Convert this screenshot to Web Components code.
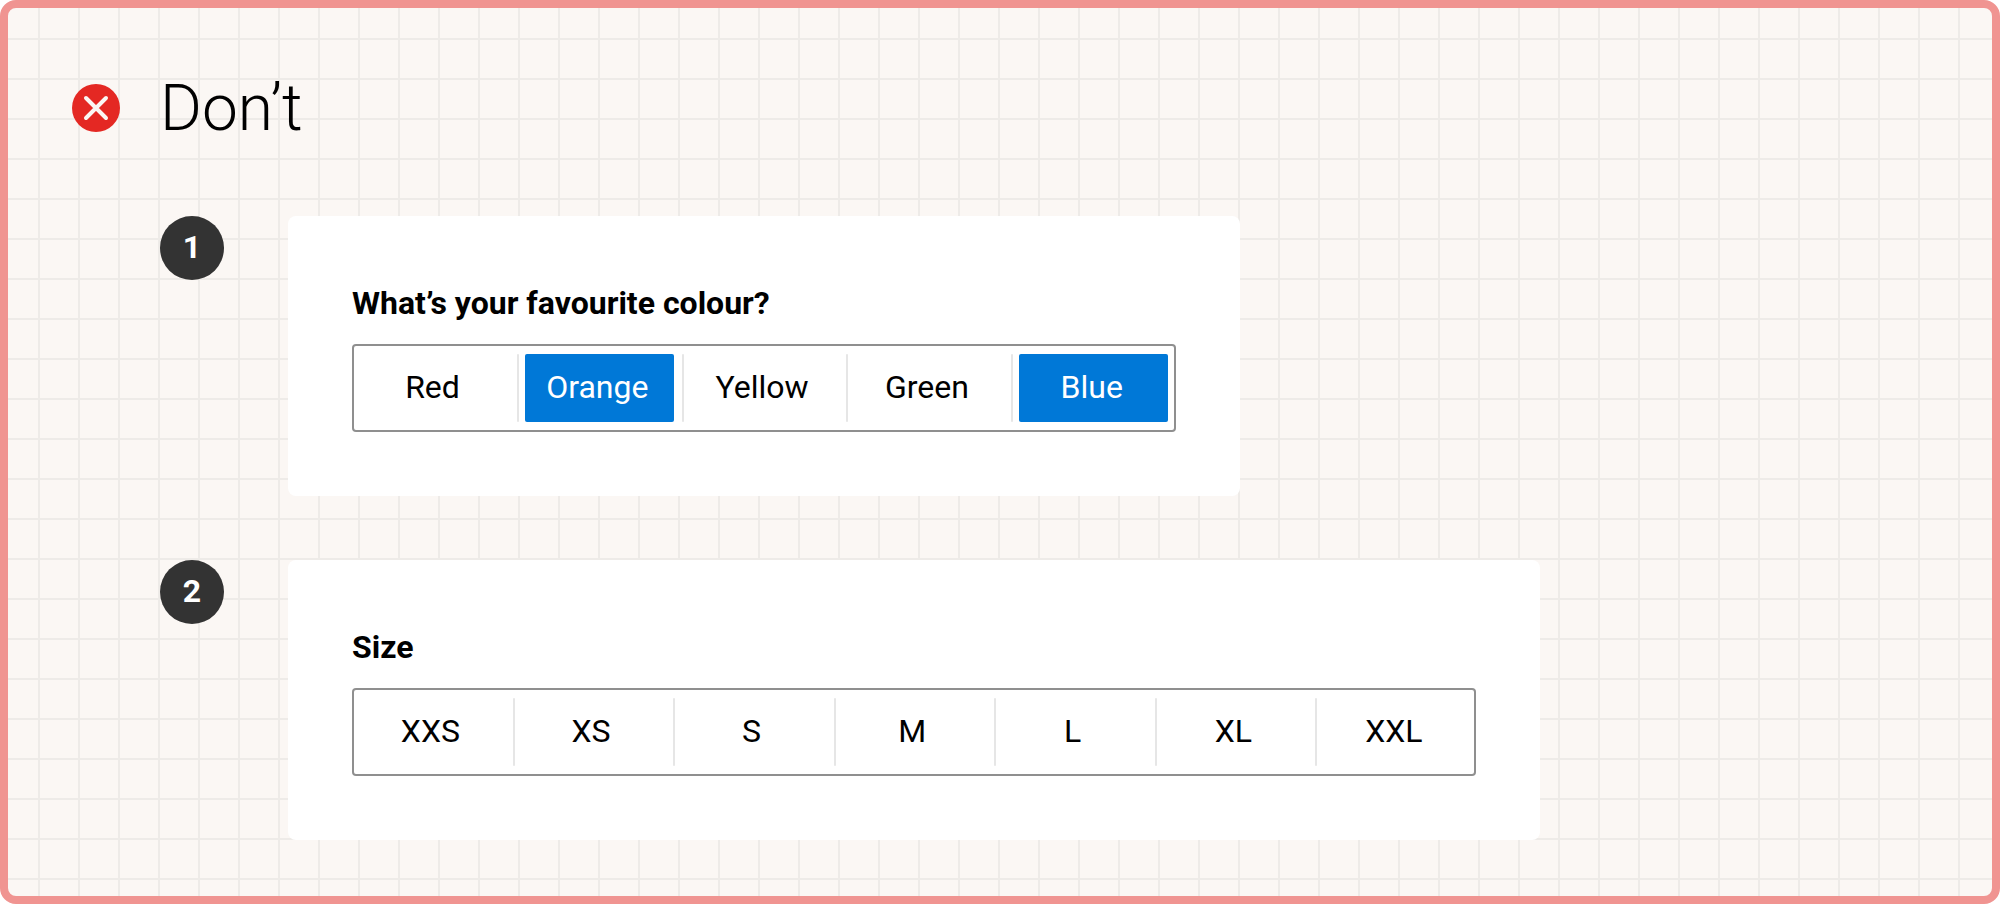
<!DOCTYPE html>
<html lang="en">
<head>
<meta charset="utf-8">
<title>Don’t</title>
<style>
html,body{margin:0;background:#fff}
body{font-family:Roboto,sans-serif;color:#000}
</style>
</head>
<body>
<guideline-panel>
  <guideline-heading slot="heading">Don’t</guideline-heading>
  <numbered-example number="1">
    <choice-group label="What’s your favourite colour?" style="width:824px">
      <choice-option>Red</choice-option>
      <choice-option selected>Orange</choice-option>
      <choice-option>Yellow</choice-option>
      <choice-option>Green</choice-option>
      <choice-option selected>Blue</choice-option>
    </choice-group>
  </numbered-example>
  <numbered-example number="2">
    <choice-group label="Size" style="width:1124px">
      <choice-option>XXS</choice-option>
      <choice-option>XS</choice-option>
      <choice-option>S</choice-option>
      <choice-option>M</choice-option>
      <choice-option>L</choice-option>
      <choice-option>XL</choice-option>
      <choice-option>XXL</choice-option>
    </choice-group>
  </numbered-example>
</guideline-panel>
<script>
const define = (name, html, init) => customElements.define(name, class extends HTMLElement {
  constructor() {
    super();
    this.attachShadow({mode: 'open'}).innerHTML = html;
  }
  connectedCallback() { if (init) init(this, this.shadowRoot); }
});

define('guideline-panel', `<style>
:host{display:block;box-sizing:border-box;width:2000px;height:904px;border:8px solid #f09491;border-radius:16px;
  padding:60px 64px 0;background-color:#fbf7f4;
  background-image:linear-gradient(to right,transparent 38px,#eeebe8 38px),linear-gradient(transparent 38px,#eeebe8 38px);
  background-size:40px 40px;background-origin:border-box}
.examples{display:flex;flex-direction:column;align-items:flex-start;gap:64px;margin:68px 0 0 88px}
</style><slot name="heading"></slot><div class="examples"><slot></slot></div>`);

define('guideline-heading', `<style>
:host{display:flex;align-items:center;gap:40px;height:80px;font-size:64px;font-weight:300;line-height:80px}
svg{display:block;flex:none}
span{padding-top:1.5px}
</style><svg width="48" height="48" viewBox="0 0 48 48"><circle cx="24" cy="24" r="24" fill="#e42823"/><path d="M14 14L34 34M34 14L14 34" stroke="#fbf7f4" stroke-width="4" stroke-linecap="round"/></svg><span><slot></slot></span>`);

define('numbered-example', `<style>
:host{display:flex;align-items:flex-start;gap:64px}
.badge{flex:none;width:64px;height:64px;border-radius:50%;background:#333;color:#fff;font-size:32px;font-weight:700;line-height:62px;text-align:center}
.card{background:#fff;border-radius:8px;padding:64px;height:152px}
</style><div class="badge"></div><div class="card"><slot></slot></div>`,
(el, root) => { root.querySelector('.badge').textContent = el.getAttribute('number'); });

define('choice-group', `<style>
:host{display:block}
.label{font-size:32px;font-weight:700;line-height:46px;height:64px}
.track{display:flex;height:88px;border-radius:4px;box-shadow:inset 0 0 0 2px #8f8f8f}
</style><div class="label"></div><div class="track"><slot></slot></div>`,
(el, root) => { root.querySelector('.label').textContent = el.getAttribute('label'); });

define('choice-option', `<style>
:host{flex:1 1 0;min-width:0;box-sizing:border-box;display:flex;padding:10px 8px 10px 0;font-size:32px}
.divider{flex:none;width:2px;margin-right:6px;border-radius:1px;background:#e6e6e6}
:host(:first-child) .divider{background:none}
.face{flex:1;display:flex;align-items:center;justify-content:center;border-radius:2px;padding:0 3.8px 3px 0}
:host([selected]) .face{background:#0078d7;color:#fff}
</style><div class="divider"></div><div class="face"><slot></slot></div>`);
</script>
</body>
</html>
